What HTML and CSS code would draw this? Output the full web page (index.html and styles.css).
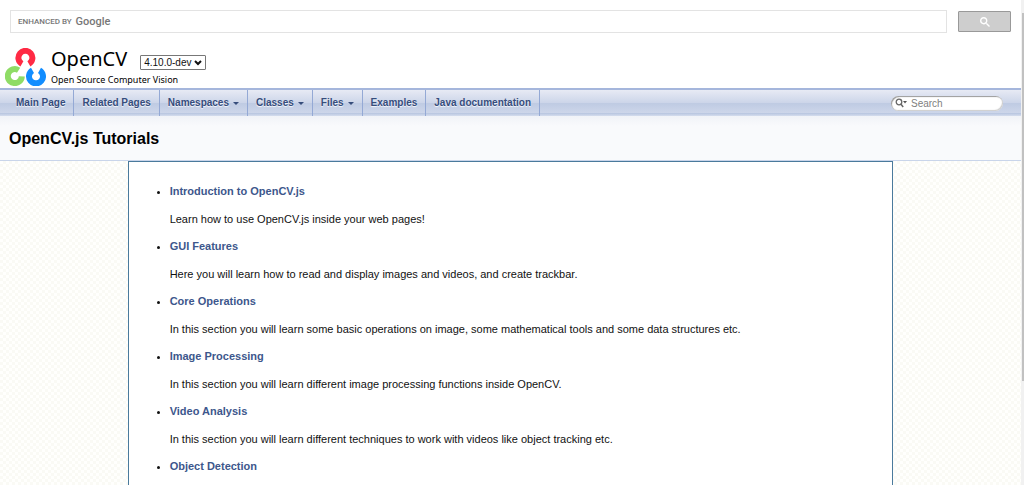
FILE: index.html
```html
<!DOCTYPE html>
<html lang="en">
<head>
<meta charset="utf-8">
<title>OpenCV: OpenCV.js Tutorials</title>
<link rel="stylesheet" href="styles.css">
</head>
<body>
<div class="page">
  <form class="google" role="search">
    <label class="google-box">
      <span class="enhanced">ENHANCED BY</span>
      <span class="google-name">Google</span>
      <input class="google-input" type="text" aria-label="Google search">
    </label>
    <button class="google-button" type="button" aria-label="Search">
      <svg width="10" height="10" viewBox="0 0 13 13"><path fill="#fff" d="m4.8495 7.8226c.82666 0 1.5262-.29146 2.0985-.87438.57232-.58292.86378-1.2877.87438-2.1144.010599-.82666-.28086-1.5262-.87438-2.0985-.59352-.57232-1.293-.86378-2.0985-.87438-.8055-.010599-1.5103.28086-2.1144.87438-.60414.59352-.8956 1.293-.87438 2.0985.021197.8055.31266 1.5103.87438 2.1144.56172.60414 1.2665.8956 2.1144.87438zm4.4695.2115 3.681 3.6819-1.259 1.284-3.6817-3.7.0019784-.69479-.090043-.098846c-.87973.76087-1.92 1.1413-3.1207 1.1413-1.3553 0-2.5025-.46363-3.4417-1.3909s-1.4088-2.0686-1.4088-3.4239c0-1.3553.4696-2.4966 1.4088-3.4239.9392-.92727 2.0864-1.3969 3.4417-1.4088 1.3553-.011889 2.4906.45771 3.406 1.4088.9154.95107 1.379 2.0924 1.3909 3.4239 0 1.2126-.38043 2.2588-1.1413 3.1385l.098834.090049z"/></svg>
    </button>
  </form>

  <header class="brand">
    <svg class="logo" width="41" height="38" viewBox="0 0 41 38" fill="none" stroke-width="6">
      <path stroke="#ff2a44" d="M16.9 15.9A7 7 0 1 1 23.9 15.9"/>
      <path stroke="#8fdc66" d="M13.6 22.2A7 7 0 1 0 16.8 28.3"/>
      <path stroke="#128dff" d="M27.5 22.3A7 7 0 1 0 34.5 22.3"/>
    </svg>
    <div>
      <div class="brand-row">
        <span class="brand-name">OpenCV</span>
        <span class="version">
          <select aria-label="Version"><option>4.10.0-dev</option></select>
          <svg width="8" height="6" viewBox="0 0 8 6"><path d="M1 1l3 3 3-3" fill="none" stroke="#111" stroke-width="2"/></svg>
        </span>
      </div>
      <div class="brand-brief">Open Source Computer Vision</div>
    </div>
  </header>

  <nav class="nav">
    <ul class="menu">
      <li><a href="#">Main Page</a></li>
      <li><a href="#">Related Pages</a></li>
      <li><a class="sub" href="#">Namespaces</a></li>
      <li><a class="sub" href="#">Classes</a></li>
      <li><a class="sub" href="#">Files</a></li>
      <li><a href="#">Examples</a></li>
      <li><a href="#">Java documentation</a></li>
    </ul>
    <label class="search">
      <svg width="12" height="10" viewBox="0 0 12 10"><circle cx="4" cy="4" r="2.8" fill="none" stroke="#666" stroke-width="1.3"/><path d="M5.8 6l2.4 3" stroke="#666" stroke-width="1.5"/><path d="M8 3h4l-2 2.4z" fill="#555"/></svg>
      <input type="text" placeholder="Search" aria-label="Search">
    </label>
  </nav>

  <div class="header"><h1>OpenCV.js Tutorials</h1></div>

  <main class="backdrop">
    <div class="contents">
      <ul class="topics">
        <li><a href="#">Introduction to OpenCV.js</a><p>Learn how to use OpenCV.js inside your web pages!</p></li>
        <li><a href="#">GUI Features</a><p>Here you will learn how to read and display images and videos, and create trackbar.</p></li>
        <li><a href="#">Core Operations</a><p>In this section you will learn some basic operations on image, some mathematical tools and some data structures etc.</p></li>
        <li><a href="#">Image Processing</a><p>In this section you will learn different image processing functions inside OpenCV.</p></li>
        <li><a href="#">Video Analysis</a><p>In this section you will learn different techniques to work with videos like object tracking etc.</p></li>
        <li><a href="#">Object Detection</a></li>
      </ul>
    </div>
  </main>
</div>
<div class="scrollbar"><div class="thumb"></div></div>
</body>
</html>
```
FILE: styles.css
```css
* { box-sizing: border-box; }
body {
  margin: 0;
  height: 100vh;
  display: flex;
  overflow: hidden;
  background: #fff;
  color: #222;
  font: 11px/15px "Liberation Sans", Arial, sans-serif;
}
.page { flex: 1; min-width: 0; display: flex; flex-direction: column; }
.scrollbar { width: 3px; padding: 13px 0 0 1px; background: #f1f1f1; }
.thumb { height: 78%; background: #c1c1c1; }

.google { display: flex; align-items: center; gap: 11px; padding: 10px 10px 0 10px; }
.google-box {
  flex: 1;
  display: flex;
  align-items: center;
  height: 23px;
  padding: 0 7px;
  border: 1px solid #e3e3e3;
  color: #777;
}
.enhanced { font: 500 8px/12px Roboto, sans-serif; }
.google-name { margin-left: 4px; font: 500 11px/14px Roboto, sans-serif; }
.google-input { flex: 1; border: 0; outline: 0; background: none; }
.google-button {
  width: 53px;
  height: 21px;
  padding: 0;
  display: flex;
  align-items: center;
  justify-content: center;
  border: 1px solid #999;
  border-radius: 1px;
  background: #cecece;
}

.brand { display: flex; gap: 5px; padding: 15px 5px 1px; color: #000; }
.brand .logo { flex: none; }
.brand-row { display: flex; align-items: flex-end; gap: 13px; height: 24px; }
.brand-name { font: 20px/24px "Noto Sans", sans-serif; padding-bottom: 1px; }
.version { position: relative; display: flex; margin-bottom: 2px; }
.version select {
  appearance: none;
  width: 66px;
  height: 15px;
  padding: 0 12px 0 3px;
  border: 1px solid #777;
  border-radius: 1px;
  background: #fff;
  color: #111;
  font: 10px/13px "Liberation Sans", Arial, sans-serif;
}
.version svg { position: absolute; right: 4px; top: 5px; pointer-events: none; }
.brand-brief { font: 9px/15px "Noto Sans", sans-serif; }

.nav {
  display: flex;
  align-items: center;
  justify-content: space-between;
  height: 28px;
  padding: 0 18px 0 8px;
  border-top: 2px solid #a5b6dc;
  background: linear-gradient(#e7eaf4, #ccd5e9 50%, #bfcbe3 52%, #cdd6ea 88%, #bac7e1 90%, #d5ddee);
}
.menu { display: flex; margin: 0; padding: 0; list-style: none; }
.menu li { padding: 0 8px; border-right: 1px solid #94a9d5; }
.menu a {
  display: flex;
  align-items: center;
  gap: 4px;
  color: #364d7c;
  font-size: 10px;
  font-weight: bold;
  line-height: 26px;
  text-decoration: none;
  text-shadow: 0 1px 1px #ffffffe6;
}
.sub::after { content: ""; border: 3px solid transparent; border-top-color: #364d7c; border-bottom: 0; }
.search {
  display: flex;
  align-items: center;
  gap: 4px;
  width: 112px;
  height: 15px;
  padding: 0 4px;
  border-radius: 8px;
  background: #fff;
  box-shadow: inset 1px 1px 1px #999, inset -1px -1px 1px #ccc;
}
.search input { flex: 1; min-width: 0; padding: 0; border: 0; outline: 0; background: none; font: 10px/13px "Liberation Sans", Arial, sans-serif; }
.search input::placeholder { color: #808080; opacity: 1; }

.header {
  padding: 11px 9px 10px;
  border-bottom: 1px solid #c9d5ea;
  background: linear-gradient(#f1f3f8, #f9fafc 10px);
}
h1 { margin: 0; color: #000; font-size: 16px; line-height: 23px; }

.backdrop {
  flex: 1;
  min-height: 0;
  background: repeating-conic-gradient(#fafaf5 0 25%, #fffffd 0 50%) 0 0 / 6px 6px;
}
.contents {
  width: 75%;
  height: 100%;
  margin: 0 auto;
  padding: 22px 11px 0;
  border: 1px solid #4a7a9c;
  border-bottom: 0;
  background: #fff;
}
.topics { margin: 0; padding: 0 0 0 30px; color: #111; }
.topics p { margin: 12px 0; line-height: 16px; }
.topics a { color: #3d578c; font-weight: bold; text-decoration: none; }
```
